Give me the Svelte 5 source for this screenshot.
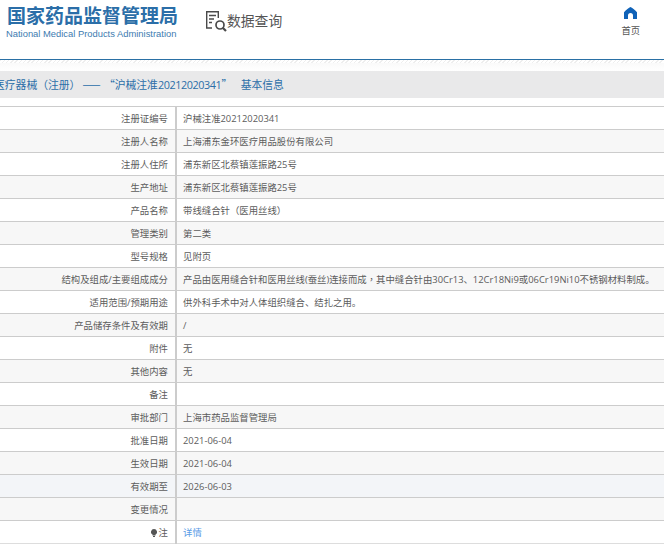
<script>
  const rows = [
    ['注册证编号', '沪械注准20212020341'],
    ['注册人名称', '上海浦东金环医疗用品股份有限公司'],
    ['注册人住所', '浦东新区北蔡镇莲振路25号'],
    ['生产地址', '浦东新区北蔡镇莲振路25号'],
    ['产品名称', '带线缝合针（医用丝线）'],
    ['管理类别', '第二类'],
    ['型号规格', '见附页'],
    ['结构及组成/主要组成成分', '产品由医用缝合针和医用丝线(蚕丝)连接而成，其中缝合针由30Cr13、12Cr18Ni9或06Cr19Ni10不锈钢材料制成。'],
    ['适用范围/预期用途', '供外科手术中对人体组织缝合、结扎之用。'],
    ['产品储存条件及有效期', '/'],
    ['附件', '无'],
    ['其他内容', '无'],
    ['备注', ''],
    ['审批部门', '上海市药品监督管理局'],
    ['批准日期', '2021-06-04'],
    ['生效日期', '2021-06-04'],
    ['有效期至', '2026-06-03'],
    ['变更情况', '']
  ];

  // fullwidth brackets and comma sit centred in the original, TC glyphs do that
  const parts = (s) => s.split(/([（），])/);
</script>

<div class="page">
  <header class="top">
    <div class="logo">
      <div class="logo-cn">国家药品监督管理局</div>
      <div class="logo-en">National Medical Products Administration</div>
    </div>
    <div class="query">
      <svg width="22" height="22" viewBox="0 0 22 22" fill="none" stroke="#4a4a4a" stroke-width="1.4">
        <path d="M7 18H1.700V1.700H13.300V8" />
        <path d="M4 5.500h7M4 9h5M4 12.500h3" />
        <circle cx="15" cy="15" r="4" stroke-width="1.700" />
        <path d="M18 18l3 3" stroke-width="2.200" />
      </svg>
      <span>数据查询</span>
    </div>
    <div class="home">
      <svg width="13" height="12" viewBox="0 0 13 12" fill="#0f62b8">
        <path d="M6.500 0C8 .8 11 3 13 5.200V12H9V8.500a2.500 2.500 0 0 0-5 0V12H0V5.200C2 3 5 .8 6.500 0Z" />
      </svg>
      <span>首页</span>
    </div>
  </header>
  <div class="band"></div>
  <h2 class="title">医疗器械<span class="tc">（</span>注册<span class="tc">）</span><span class="dash">——</span> “沪械注准<span class="num">20212020341</span>” <span class="tail">基本信息</span></h2>
  <table>
    <tbody>
      {#each rows as row, i}
        <tr class:odd={i % 2 === 1} class:hover={i === 16}>
          <td class="label">{row[0]}</td>
          <td>{#each parts(row[1]) as part, k}{#if k % 2}<span class="tc">{part}</span>{:else}{part}{/if}{/each}</td>
        </tr>
      {/each}
      <tr>
        <td class="label">
          <svg class="bulb" width="6" height="8" viewBox="0 0 6 8" fill="#555">
            <path d="M3 0a3 3 0 0 1 1.500 5.600V6.500h-3V5.600A3 3 0 0 1 3 0ZM2 7h2v1H2Z" />
          </svg>注
        </td>
        <td><span class="link">详情</span></td>
      </tr>
    </tbody>
  </table>
</div>

<style>
  :global(body) {
    margin: 0;
    background: #fff;
    overflow: hidden;
  }
  .page {
    width: 664px;
    height: 552px;
    overflow: hidden;
    font-family: "Open Sans", "Noto Sans CJK SC", sans-serif;
    color: #555;
  }
  .top {
    height: 59px;
    display: flex;
    align-items: flex-start;
    border-bottom: 1px solid #2a70a5;
  }
  .logo {
    width: 198px;
    padding: 4px 0 0 7px;
    flex: none;
  }
  .logo-cn {
    font-family: "Noto Sans CJK SC", sans-serif;
    font-size: 19px;
    line-height: 22px;
    font-weight: 700;
    color: #2b6ea8;
    white-space: nowrap;
  }
  .logo-en {
    font-family: "Liberation Sans", sans-serif;
    font-size: 9.400px;
    line-height: 12px;
    margin-top: 2px;
    margin-left: -1px;
    color: #3d7bb0;
    white-space: nowrap;
  }
  .query {
    display: flex;
    align-items: center;
    margin-top: 10px;
    color: #555;
    font-size: 13.800px;
    line-height: 22px;
  }
  .home {
    margin-left: auto;
    margin-right: 24px;
    margin-top: 7px;
    display: flex;
    flex-direction: column;
    align-items: center;
    gap: 6px;
    font-size: 9.300px;
    line-height: 12px;
    color: #555;
  }
  .band {
    height: 11px;
    background:
      repeating-linear-gradient(135deg, #eee 0 1px, #fff 1px 3px) top / 100% 3px no-repeat,
      linear-gradient(#f8f8f8, #fff);
  }
  .title {
    margin: 0 0 0 -6px;
    width: 670px;
    height: 27px;
    background: #e9e9ea;
    font-family: "Noto Sans CJK SC", sans-serif;
    font-size: 10.800px;
    line-height: 27px;
    font-weight: 400;
    color: #2b6ea8;
    white-space: nowrap;
  }
  .dash {
    margin-left: 2px;
    letter-spacing: 1px;
  }
  .num {
    font-family: "Open Sans", sans-serif;
    letter-spacing: -0.4px;
  }
  .tail {
    margin-left: 6px;
  }
  .tc {
    font-family: "Noto Sans CJK TC", sans-serif;
  }
  table {
    margin: 8px 0 0 -60px;
    width: 724px;
    border-collapse: collapse;
    font-size: 9.400px;
    border-bottom: 1px solid #ddd;
  }
  tr {
    height: 23px;
  }
  td {
    border-top: 1px solid #ccc;
    padding: 1px 0 0 6px;
    white-space: nowrap;
    line-height: 20px;
    color: #5c5c5c;
  }
  td.label {
    width: 228px;
    text-align: right;
    padding: 1px 7px 0 0;
    border-right: 2px solid #ccc;
  }
  tr.odd td {
    background: #f7f7f7;
  }
  tr.hover td {
    background: #f3f5f8;
  }
  .bulb {
    vertical-align: -1px;
    margin-right: 2px;
  }
  .link {
    color: #5a9be6;
  }
</style>
